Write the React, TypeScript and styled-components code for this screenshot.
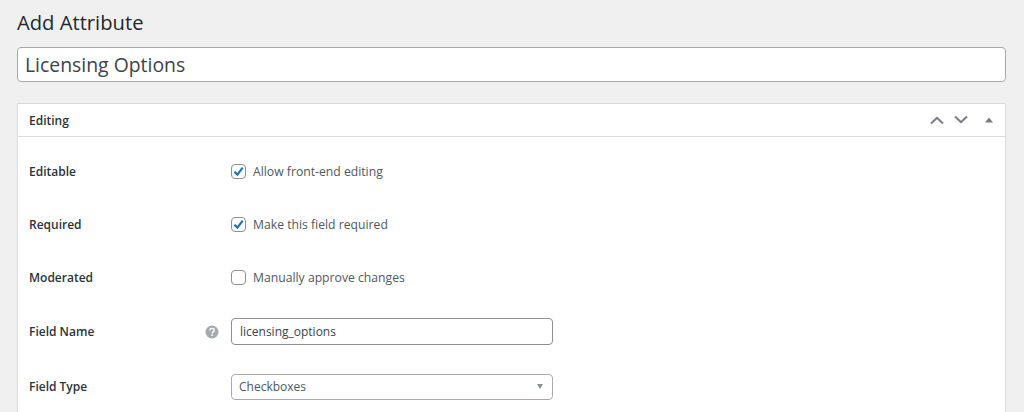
import styled, { createGlobalStyle } from "styled-components";

const GlobalStyle = createGlobalStyle`
  html, body {
    margin: 0;
    height: 412px;
    overflow: hidden;
    background: #f0f0f1;
    font-family: "Open Sans", "Noto Sans", sans-serif;
  }
`;

const Page = styled.div`
  display: flex;
  flex-direction: column;
  padding: 8px 18px 0 17px;
`;

const Title = styled.h1`
  margin: 0 0 11px;
  height: 28px;
  line-height: 28px;
  font-size: 20.2px;
  font-weight: 400;
  color: #23282d;
`;

const TitleInput = styled.div`
  box-sizing: border-box;
  height: 35px;
  margin-bottom: 21px;
  padding: 0 7px;
  display: flex;
  align-items: center;
  background: #fff;
  border: 1px solid #a7aaad;
  border-radius: 4px;
  font-size: 19.4px;
  color: #3c434a;
`;

const Card = styled.section`
  background: #fff;
  border: 1px solid #dcdcde;
  border-bottom: none;
  height: 320px;
`;

const CardHeader = styled.header`
  height: 32px;
  padding: 0 11px;
  display: flex;
  align-items: center;
  justify-content: space-between;
  border-bottom: 1px solid #dcdcde;
`;

const CardTitle = styled.h2`
  margin: 0;
  font-size: 12px;
  font-weight: 600;
  color: #2c3338;
`;

const Handles = styled.div`
  display: flex;
  align-items: center;
  margin-right: -5px;
  gap: 8px;
`;

const Rows = styled.div`
  display: flex;
  flex-direction: column;
  padding-top: 8px;
`;

const Row = styled.div<{ $height: number }>`
  height: ${(p) => p.$height}px;
  padding: 0 11px;
  display: flex;
  align-items: center;
`;

const Label = styled.div`
  width: 176px;
  font-size: 12px;
  font-weight: 600;
  color: #2c3338;
`;

const HelpColumn = styled.div`
  width: 14px;
  margin-right: 12px;
  display: flex;
  align-items: center;
`;

const CheckLabel = styled.label`
  display: flex;
  align-items: center;
  gap: 7px;
  font-size: 12.2px;
  color: #50575e;
`;

const CheckBox = styled.span`
  box-sizing: border-box;
  width: 15px;
  height: 15px;
  display: flex;
  align-items: center;
  justify-content: center;
  background: #fff;
  border: 1px solid #8c8f94;
  border-radius: 4px;
`;

const TextField = styled.div`
  box-sizing: border-box;
  width: 322px;
  height: 27px;
  padding: 0 8px;
  display: flex;
  align-items: center;
  background: #fff;
  border: 1px solid #8c8f94;
  border-radius: 4px;
  font-size: 12px;
  color: #3c434a;
`;

const SelectField = styled(TextField)`
  justify-content: space-between;
  height: 26px;
  padding: 0 8px 0 7px;
  border-color: #a7aaad;
  color: #50575e;
`;

const Caret = styled.span`
  width: 0;
  height: 0;
  margin-right: 1px;
  border-left: 3px solid transparent;
  border-right: 3px solid transparent;
  border-top: 5px solid #8c8f94;
`;

const Indent = styled.div`
  width: 26px;
`;

const Chevron = ({ up }: { up?: boolean }) => (
  <svg width="16" height="10" viewBox="0 0 16 10" fill="none">
    <path
      d={up ? "M2 8.5 8 2.8l6 5.7" : "M2 1.5l6 5.7 6-5.7"}
      stroke="#787c82"
      strokeWidth="2"
    />
  </svg>
);

const Tick = () => (
  <svg width="13" height="13" viewBox="0 0 12 12" fill="none">
    <path d="M2.2 6.2 5 8.9l4.9-6.4" stroke="#2271b1" strokeWidth="2" />
  </svg>
);

const Help = () => (
  <svg width="14" height="14" viewBox="0 0 14 14">
    <circle cx="7" cy="7" r="6.5" fill="#a7aaad" />
    <path
      d="M4.9 5.4c.1-1.3 1-2 2.2-2s2.1.7 2.1 1.8c0 1.7-2 1.6-2 3.2"
      fill="none"
      stroke="#fff"
      strokeWidth="1.4"
    />
    <circle cx="7.1" cy="10.2" r=".9" fill="#fff" />
  </svg>
);

const options = [
  { label: "Editable", text: "Allow front-end editing", checked: true },
  { label: "Required", text: "Make this field required", checked: true },
  { label: "Moderated", text: "Manually approve changes", checked: false },
];

const App = () => {
  return (
    <Page>
      <GlobalStyle />
      <Title>Add Attribute</Title>
      <TitleInput>Licensing Options</TitleInput>
      <Card>
        <CardHeader>
          <CardTitle>Editing</CardTitle>
          <Handles>
            <Chevron up />
            <Chevron />
            <svg width="22" height="10" viewBox="0 0 22 10">
              <path d="M12 2.5l4 5H8z" fill="#787c82" />
            </svg>
          </Handles>
        </CardHeader>
        <Rows>
          {options.map((o) => (
            <Row key={o.label} $height={53}>
              <Label>{o.label}</Label>
              <Indent />
              <CheckLabel>
                <CheckBox>{o.checked && <Tick />}</CheckBox>
                {o.text}
              </CheckLabel>
            </Row>
          ))}
          <Row $height={55}>
            <Label>Field Name</Label>
            <HelpColumn>
              <Help />
            </HelpColumn>
            <TextField>licensing_options</TextField>
          </Row>
          <Row $height={55}>
            <Label>Field Type</Label>
            <Indent />
            <SelectField>
              Checkboxes
              <Caret />
            </SelectField>
          </Row>
        </Rows>
      </Card>
    </Page>
  );
};

export default App;
